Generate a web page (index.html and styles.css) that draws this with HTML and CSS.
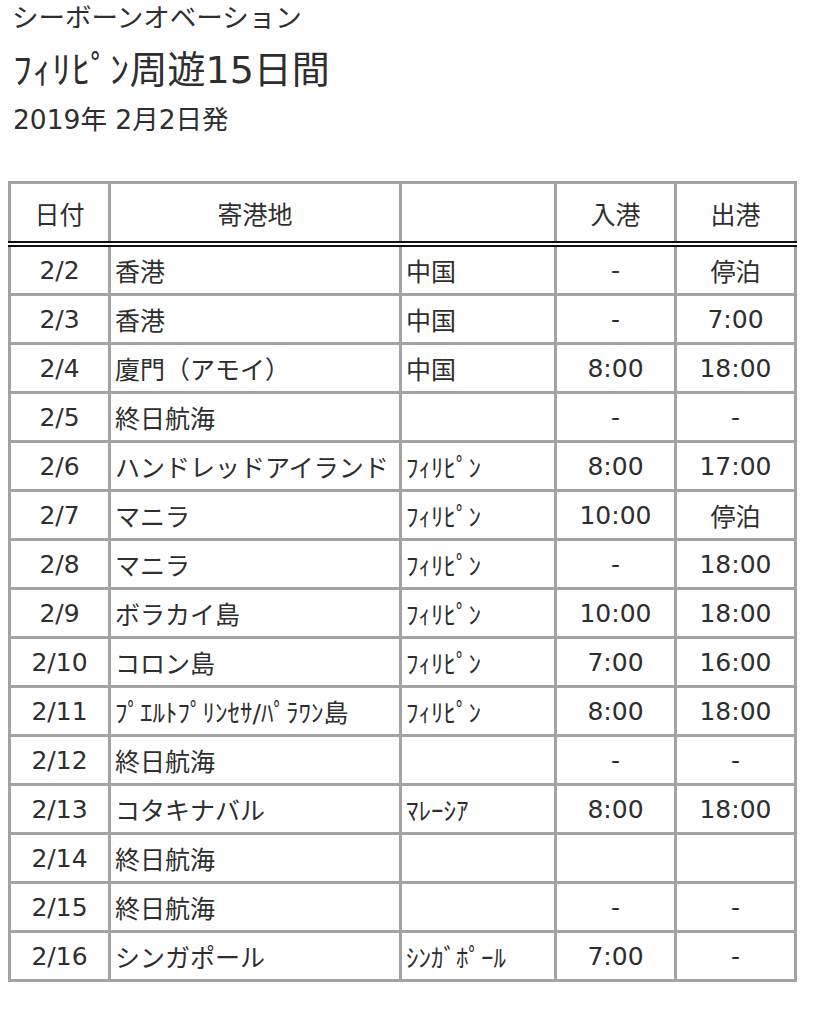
FILE: index.html
```html
<!DOCTYPE html>
<html lang="ja">
<head>
<meta charset="utf-8">
<title>ﾌｨﾘﾋﾟﾝ周遊15日間</title>
<link rel="stylesheet" href="styles.css">
</head>
<body>
<div class="page">
  <p class="brand">シーボーンオベーション</p>
  <h1 class="title"><span class="hw">ﾌｨﾘﾋﾟﾝ</span>周遊15日間</h1>
  <p class="date">2019年 2月2日発</p>
  <table class="itinerary">
    <colgroup>
      <col class="c-date"><col class="c-port"><col class="c-country"><col class="c-time"><col class="c-time">
    </colgroup>
    <thead>
      <tr><th>日付</th><th>寄港地</th><th></th><th>入港</th><th>出港</th></tr>
    </thead>
    <tbody>
      <tr><td class="d">2/2</td><td class="p">香港</td><td class="n">中国</td><td class="t">-</td><td class="t">停泊</td></tr>
      <tr><td class="d">2/3</td><td class="p">香港</td><td class="n">中国</td><td class="t">-</td><td class="t">7:00</td></tr>
      <tr><td class="d">2/4</td><td class="p">廈門（アモイ）</td><td class="n">中国</td><td class="t">8:00</td><td class="t">18:00</td></tr>
      <tr><td class="d">2/5</td><td class="p">終日航海</td><td class="n"></td><td class="t">-</td><td class="t">-</td></tr>
      <tr><td class="d">2/6</td><td class="p">ハンドレッドアイランド</td><td class="n">ﾌｨﾘﾋﾟﾝ</td><td class="t">8:00</td><td class="t">17:00</td></tr>
      <tr><td class="d">2/7</td><td class="p">マニラ</td><td class="n">ﾌｨﾘﾋﾟﾝ</td><td class="t">10:00</td><td class="t">停泊</td></tr>
      <tr><td class="d">2/8</td><td class="p">マニラ</td><td class="n">ﾌｨﾘﾋﾟﾝ</td><td class="t">-</td><td class="t">18:00</td></tr>
      <tr><td class="d">2/9</td><td class="p">ボラカイ島</td><td class="n">ﾌｨﾘﾋﾟﾝ</td><td class="t">10:00</td><td class="t">18:00</td></tr>
      <tr><td class="d">2/10</td><td class="p">コロン島</td><td class="n">ﾌｨﾘﾋﾟﾝ</td><td class="t">7:00</td><td class="t">16:00</td></tr>
      <tr><td class="d">2/11</td><td class="p">ﾌﾟｴﾙﾄﾌﾟﾘﾝｾｻ/ﾊﾟﾗﾜﾝ島</td><td class="n">ﾌｨﾘﾋﾟﾝ</td><td class="t">8:00</td><td class="t">18:00</td></tr>
      <tr><td class="d">2/12</td><td class="p">終日航海</td><td class="n"></td><td class="t">-</td><td class="t">-</td></tr>
      <tr><td class="d">2/13</td><td class="p">コタキナバル</td><td class="n">ﾏﾚｰｼｱ</td><td class="t">8:00</td><td class="t">18:00</td></tr>
      <tr><td class="d">2/14</td><td class="p">終日航海</td><td class="n"></td><td class="t"></td><td class="t"></td></tr>
      <tr><td class="d">2/15</td><td class="p">終日航海</td><td class="n"></td><td class="t">-</td><td class="t">-</td></tr>
      <tr><td class="d">2/16</td><td class="p">シンガポール</td><td class="n">ｼﾝｶﾞﾎﾟｰﾙ</td><td class="t">7:00</td><td class="t">-</td></tr>
    </tbody>
  </table>
</div>
</body>
</html>
```

FILE: styles.css
```css
html, body {
  margin: 0;
  padding: 0;
  background: #ffffff;
}

body {
  font-family: "DejaVu Sans", "Noto Sans CJK JP", sans-serif;
  color: #2e2e2e;
}

.page {
  padding: 0 0 0 8px;
}

.brand {
  margin: 0;
  padding-left: 4px;
  font-size: 26.5px;
  line-height: 36px;
  font-weight: normal;
}

.title {
  margin: 0;
  padding-left: 5px;
  font-size: 38px;
  line-height: 68px;
  font-weight: normal;
}

.title .hw {
  letter-spacing: 0.5px;
}

.date {
  margin: 0 0 45px 0;
  padding-left: 5px;
  font-size: 26.5px;
  line-height: 32px;
}

.itinerary {
  border-collapse: collapse;
  table-layout: fixed;
  width: 789px;
  font-size: 25px;
}

.c-date { width: 100px; }
.c-port { width: 291px; }
.c-country { width: 155px; }
.c-time { width: 120px; }

.itinerary th,
.itinerary td {
  border: 3px solid #a3a3a3;
  padding: 0 4px;
  white-space: nowrap;
  overflow: hidden;
}

.itinerary th {
  height: 57px;
  font-weight: normal;
  text-align: center;
  border-bottom: 6px double #111;
}

.itinerary td {
  height: 46px;
}

.itinerary td.d,
.itinerary td.t {
  text-align: center;
}

.itinerary td.p,
.itinerary td.n {
  text-align: left;
}
```
